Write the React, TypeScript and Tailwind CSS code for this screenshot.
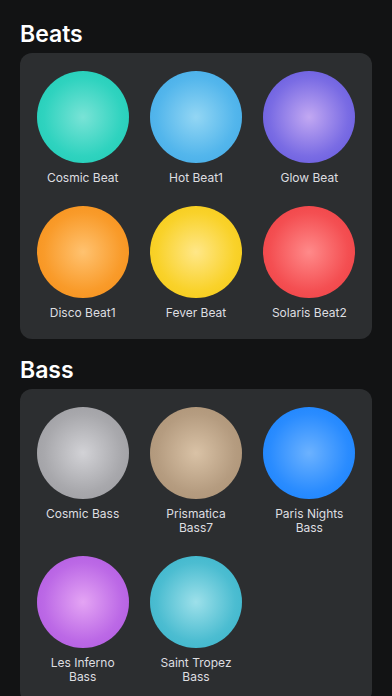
type Pad = { name: string[]; edge: string; mid: string; center: string };

const beats: Pad[] = [
  { name: ["Cosmic Beat"], edge: "#1ccab4", mid: "#2fd3bf", center: "#79e3d6" },
  { name: ["Hot Beat1"], edge: "#3fa8e6", mid: "#53b6ec", center: "#93d6f4" },
  { name: ["Glow Beat"], edge: "#5e53dc", mid: "#7a6ce4", center: "#c2a8f2" },
  { name: ["Disco Beat1"], edge: "#f58c14", mid: "#f99b2a", center: "#ffc270" },
  { name: ["Fever Beat"], edge: "#f4c70e", mid: "#f9d22a", center: "#ffe788" },
  { name: ["Solaris Beat2"], edge: "#ee3b3e", mid: "#f44f52", center: "#ff8a8a" },
];

const bass: Pad[] = [
  { name: ["Cosmic Bass"], edge: "#98989d", mid: "#a8a8ac", center: "#d2d2d6" },
  { name: ["Prismatica", "Bass7"], edge: "#a98f71", mid: "#b59c80", center: "#d9c2a6" },
  { name: ["Paris Nights", "Bass"], edge: "#127ffd", mid: "#2a8cff", center: "#6cb2ff" },
  { name: ["Les Inferno", "Bass"], edge: "#ad55df", mid: "#bc69e6", center: "#e4a4f4" },
  { name: ["Saint Tropez", "Bass"], edge: "#33b1c9", mid: "#4cbdd1", center: "#9de0ea" },
];

function Orb({ pad }: { pad: Pad }) {
  return (
    <div className="flex flex-col items-center">
      <div
        className="w-[92px] h-[92px] rounded-full"
        style={{
          background: `radial-gradient(circle at 50% 50%, ${pad.center} 0%, ${pad.mid} 60%, ${pad.edge} 100%)`,
        }}
      />
      <div className="mt-[8px] text-[12px] leading-[14px] text-[#dedee0] text-center">
        {pad.name.map((line) => (
          <div key={line}>{line}</div>
        ))}
      </div>
    </div>
  );
}

function Section({ title, pads }: { title: string; pads: Pad[] }) {
  return (
    <section>
      <h2 className="px-[20px] text-[23px] leading-[28px] font-semibold text-white mb-[5px]">{title}</h2>
      <div className="mx-[20px] rounded-[12px] bg-[#2c2e30] px-[6px] pt-[18px] pb-[19px] grid grid-cols-3 gap-y-[21px]">
        {pads.map((p) => (
          <Orb key={p.name.join(" ")} pad={p} />
        ))}
      </div>
    </section>
  );
}

export default function App() {
  return (
    <div
      className="min-h-screen h-[696px] overflow-hidden bg-[#121314] pt-[20px] flex flex-col gap-[17px]"
      style={{ fontFamily: "Inter, 'Liberation Sans', sans-serif" }}
    >
      <Section title="Beats" pads={beats} />
      <Section title="Bass" pads={bass} />
    </div>
  );
}
